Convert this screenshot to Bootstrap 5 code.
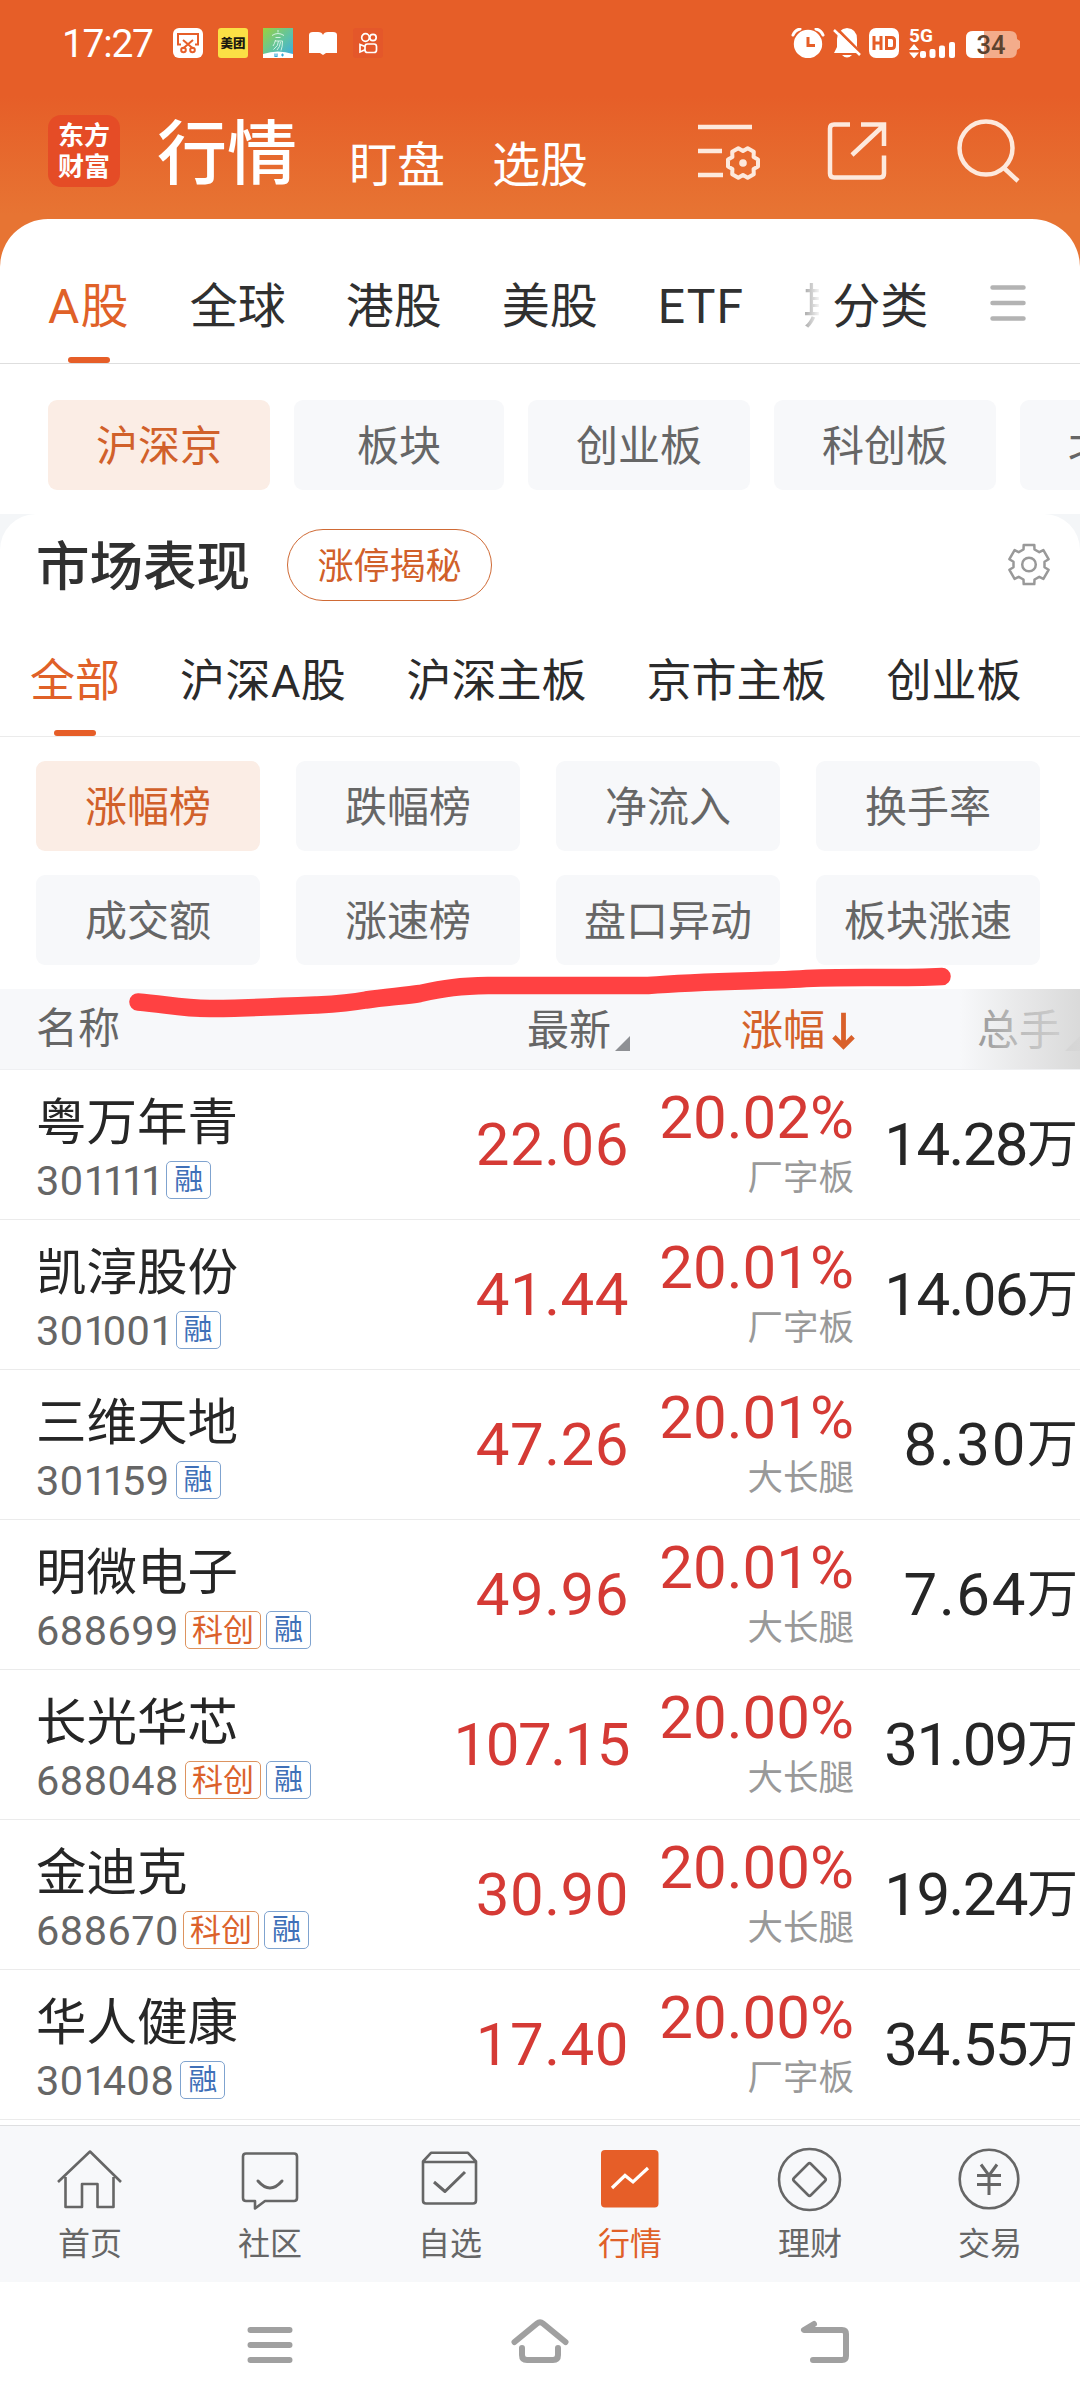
<!DOCTYPE html>
<html lang="zh-CN">
<head>
<meta charset="utf-8">
<meta name="viewport" content="width=device-width, initial-scale=1">
<title>行情</title>
<link rel="stylesheet" href="https://cdn.jsdelivr.net/npm/bootstrap@5.3.0/dist/css/bootstrap.min.css">
<style>
  body { width: 1080px; font-family: Roboto, "Noto Sans CJK SC", sans-serif; color: #303030; background: #fff; line-height: 1; overflow-x: hidden; }
  svg { display: block; flex: none; }
  .app-head { height: 267px; margin-bottom: -48px; background: linear-gradient(#e65e28 0, #e65e28 96px, #e77433 215px); color: #fff; }
  .status-bar { height: 88px; padding: 0 60px 2px 62px; }
  .clock { font-size: 39px; letter-spacing: -1.3px; width: 111px; padding-top: 2px; }
  .brand-row { height: 131px; padding: 27px 58px 0 48px; }
  .logo-box { width: 72px; height: 72px; border-radius: 13px; background: #e54c26; font-size: 26px; font-weight: 700; line-height: 31px; padding-top: 6px; text-align: center; }
  .brand-title { font-size: 70px; font-weight: 500; margin: 5px 0 0 37px; }
  .brand-link { font-size: 48px; margin-top: 27px; }
  .sheet { background: #fff; border-radius: 48px 48px 0 0; position: relative; }
  .tabs-main { height: 145px; padding: 64px 54px 0 48px; border-bottom: 1px solid #dedede; font-size: 48px; }
  .tabs-sub { height: 136px; padding: 58px 0 0 30px; border-bottom: 1px solid #ebebeb; font-size: 45px; gap: 60px; color: #2b2b2b; }
  .tab-on { color: #e06128; position: relative; }
  .tab-on::after { content: ""; position: absolute; left: 50%; margin-left: -21px; width: 42px; height: 6px; border-radius: 3px; background: #e65e28; top: 74px; }
  .tabs-sub .tab-on::after { top: 71px; }
  .cut-tab { width: 16px; overflow: hidden; -webkit-mask-image: linear-gradient(90deg, rgba(0,0,0,.45), rgba(0,0,0,.05)); mask-image: linear-gradient(90deg, rgba(0,0,0,.45), rgba(0,0,0,.05)); }
  .chip { height: 90px; border-radius: 9px; background: #f7f8fa; color: #666; font-size: 42px; padding: 3px 48px 0; min-width: 210px; display: flex; align-items: center; justify-content: center; white-space: nowrap; flex: none; }
  .chip-on { background: #fbede5; color: #d1602a; }
  .chips-scroll { height: 150px; padding: 36px 0 0 48px; gap: 24px; }
  .panel-back { background: #f4f6f8; }
  .panel-top { background: #fff; border-radius: 36px 36px 0 0; padding: 15px 30px 0 36px; }
  .panel-title { font-size: 53.5px; font-weight: 500; padding-top: 6px; }
  .pill-btn { height: 72px; width: 205px; border: 1.5px solid #cf6a35; border-radius: 37px; color: #d1602a; font-size: 36px; margin-left: 37px; padding-top: 4px; }
  .chips-grid { display: grid; grid-template-columns: repeat(4, 224px); gap: 24px 36px; padding: 24px 36px; }
  .chips-grid .chip { min-width: 0; padding: 3px 0 0; }
  .thead-row { height: 81px; background: #f7f8fa; border-bottom: 1px solid #eff0f2; font-size: 42px; color: #666; position: relative; }
  .fade-right { position: absolute; right: 0; top: 0; width: 120px; height: 80px; background: linear-gradient(90deg, rgba(226,226,226,0), rgba(222,222,222,.6) 50%, rgba(216,216,216,.95)); }
  .pen-line { position: absolute; left: 120px; top: -30px; }
  .c-name { width: 420px; padding-left: 36px; }
  .c-price { width: 209px; letter-spacing: .5px; }
  .c-rate { width: 225px; }
  .c-vol { width: 224px; }
  .stock-row { height: 150px; border-bottom: 1px solid #ebebeb; }
  .s-name { font-size: 50.5px; color: #262626; margin-top: 27px; line-height: 52px; }
  .s-code { font-size: 41.5px; color: #666; margin-top: 12px; height: 40px; line-height: 40px; gap: 5px; }
  .s-code b { font-weight: 400; letter-spacing: -4.2px; }
  .s-code .num { letter-spacing: .5px; margin-right: 1px; }
  .tag-box { height: 38px; border: 1.5px solid; border-radius: 5px; line-height: 35px; padding-top: 1px; text-align: center; }
  .tag-r { width: 45px; font-size: 29px; color: #3f70b8; border-color: #7fa3cf; }
  .tag-k { width: 76px; font-size: 31px; color: #dc622b; border-color: #dd935f; }
  .big-num { font-size: 60px; line-height: 60px; }
  .up { color: #d53a35; }
  .vol { color: #262626; white-space: nowrap; letter-spacing: -1.6px; }
  .vol-short { letter-spacing: 1.6px; }
  .vol span { font-size: 51px; letter-spacing: 0; }
  .c-rate .big-num { margin-top: 18px; }
  .shape-tag { font-size: 35.5px; color: #999; line-height: 36px; margin-top: 12px; }
  .bottom-nav { height: 157px; margin-top: 5px; border-top: 1px solid #dedfe1; background: #f7f8fa; color: #666; font-size: 32px; }
  .bottom-nav > div { width: 180px; padding-top: 20px; gap: 16px; }
  .nav-now { color: #e06128; }
  .sys-bar { height: 126px; padding: 0 135px; }
  .sys-bar > div { width: 270px; padding-top: 30px; }
</style>
</head>
<body>
<header class="app-head">
  <div class="status-bar d-flex align-items-center">
    <div class="clock">17:27</div>
    <div class="d-flex" style="gap:15px">
      <svg width="30" height="30" viewBox="0 0 30 30"><rect width="30" height="30" rx="6" fill="#fff"/><g fill="none" stroke="#e65e28" stroke-width="2"><path d="M8 16.500H5V6h20v10.500h-3M10 12l10 8.500M20 12l-10 8.500"/><circle cx="10.500" cy="22" r="2.300"/><circle cx="19.500" cy="22" r="2.300"/></g></svg>
      <svg width="30" height="30" viewBox="0 0 30 30"><rect width="30" height="30" rx="3" fill="#fbe045"/><text x="15" y="19.800" text-anchor="middle" font-size="12.500" font-weight="900" fill="#1c1a10">美团</text></svg>
      <svg width="30" height="30" viewBox="0 0 30 30"><defs><linearGradient id="gb" x1="0" y1="0" x2="1" y2="1"><stop offset="0" stop-color="#9ad23f"/><stop offset=".55" stop-color="#5fc3a4"/><stop offset="1" stop-color="#3aa9e6"/></linearGradient></defs><rect width="30" height="30" fill="url(#gb)"/><path d="M0 26q15-5 30 0v4H0z" fill="#fff"/><path d="M15 2v2.500M9 7.500q6-4 12 0M12.500 9.500h5M12.500 12q-1 4-2.500 6M12 13h7.500q0 6-1.500 9.500M15.500 13q0 5-5 8.500M17.500 14q-.5 5-3.500 8" fill="none" stroke="#dcf7ec" stroke-width=".9"/><path d="M12 25.500v3h2v-3M18 27h3M19.500 25.500v3" stroke="#39a9d8" stroke-width="1.200" fill="none"/></svg>
      <svg width="30" height="30" viewBox="0 0 30 30"><path d="M1 7q0-3 4-3h5q4 0 5 3 1-3 5-3h5q4 0 4 3v18H18l-3 2-3-2H1z" fill="#fff"/></svg>
      <svg width="30" height="30" viewBox="0 0 30 30"><rect width="30" height="30" rx="3" fill="#e4572a"/><g fill="none" stroke="#fff" stroke-width="1.700"><circle cx="12.500" cy="9.500" r="3.800"/><circle cx="20" cy="9.500" r="3.200"/><rect x="12" y="16" width="11.500" height="8.500" rx="2.500"/><path d="M12 18.500l-5-2v7.500l5-2.200"/></g></svg>
    </div>
    <div class="d-flex align-items-start ms-auto">
      <svg width="34" height="30" viewBox="0 0 34 30"><circle cx="17" cy="16" r="14.200" fill="#fff"/><path d="M2 7q2-5 7-6M32 7q-2-5-7-6" stroke="#fff" stroke-width="3" fill="none" stroke-linecap="round"/><path d="M17 9v8.500h7" stroke="#e65e28" stroke-width="3" fill="none"/></svg>
      <svg class="ms-2" width="28" height="30" viewBox="0 0 28 30"><path d="M14 0q10 1 10 11v8l3 6H1l3-6v-8Q5 1 14 0zM9 27h10q-5 5-10 0z" fill="#fff"/><path d="M3 0l26 26" stroke="#e65e28" stroke-width="3"/><path d="M1 2l26 25" stroke="#fff" stroke-width="2.500"/></svg>
      <svg class="ms-2" width="30" height="30" viewBox="0 0 30 30"><rect width="30" height="30" rx="7" fill="#fff"/><path d="M5 8v14M12 8v14M5 15h7M17.500 9.500h5q3 0 3 3v5q0 3-3 3h-5z" fill="none" stroke="#e65e28" stroke-width="3"/></svg>
      <svg class="ms-2" style="margin-right:9px" width="50" height="30" viewBox="-2 0 50 30"><text x="0" y="14" font-size="19" font-weight="700" fill="#fff" textLength="24">5G</text><path d="M0 22l5-6 5 6zM0 24.500h10l-5 6z" fill="#fff"/><g fill="#fff"><rect x="11" y="23" width="6" height="7" rx="2"/><rect x="20.500" y="21" width="6" height="9" rx="2"/><rect x="30" y="17.500" width="6" height="12.500" rx="2"/><rect x="40" y="14" width="6" height="16" rx="2"/></g></svg>
      <svg width="54" height="30" viewBox="0 0 54 30"><path d="M7 3h37q7 0 7 7v1l3 2v7l-3 2q0 8-7 8H7q-7 0-7-7V10q0-7 7-7z" fill="#f3ac8b"/><path d="M7 3h11v27H7q-7 0-7-7V10q0-7 7-7z" fill="#fff"/><text x="25" y="25.500" text-anchor="middle" font-size="25.500" font-weight="500" fill="#5d422e">34</text></svg>
    </div>
  </div>
  <div class="brand-row d-flex align-items-start">
    <div class="logo-box">东方<br>财富</div>
    <div class="brand-title">行情</div>
    <div class="brand-link" style="margin-left:52px">盯盘</div>
    <div class="brand-link" style="margin-left:47px">选股</div>
    <svg class="ms-auto" width="66" height="72" viewBox="699 115 66 72" fill="none" stroke="#fde9dd" stroke-width="4.500"><path d="M699 127h54M699 151h24M699 175h25"/><path stroke-linejoin="round" stroke-width="4" transform="translate(744 163)" d="M15-3.600V3.600L10.600 6l.2 5.300L4.700 14.800 0 12l-4.700 2.800-6.100-3.500.2-5.300L-15 3.600V-3.600L-10.600-6l-.2-5.300L-4.700-14.800 0-12l4.700-2.800 6.100 3.500-.2 5.300z"/><circle cx="744" cy="163" r="3.800" fill="#fde9dd" stroke="none"/></svg>
    <svg style="margin-left:63px" width="62" height="72" viewBox="828 115 62 72" fill="none" stroke="#fde9dd" stroke-width="4.500"><path d="M851 124.500h-16q-4 0-4 4v45q0 4 4 4h46q4 0 4-4v-18M862 124.500h23V146M884 126l-31 29"/></svg>
    <svg style="margin-left:67px" width="66" height="72" viewBox="957 115 66 72" fill="none" stroke="#fde9dd" stroke-width="4.500"><circle cx="987" cy="148" r="26.500"/><path d="M1005 168l14 13"/></svg>
  </div>
</header>

<main class="sheet">
  <nav class="tabs-main d-flex align-items-start">
    <div class="tab-on" style="letter-spacing:1.2px">A股</div>
    <div style="margin-left:60px">全球</div>
    <div style="margin-left:60px">港股</div>
    <div style="margin-left:60px">美股</div>
    <div style="margin-left:60px;letter-spacing:1.2px">ETF</div>
    <div class="cut-tab" style="margin-left:59px">期</div>
    <div style="margin-left:13px">分类</div>
    <svg class="ms-auto" width="36" height="48" viewBox="990 283 36 48" stroke="#b3b3b3" stroke-width="4.500" stroke-linecap="round"><path d="M992.500 287.500h31M992.500 303h31M992.500 318.500h31"/></svg>
  </nav>
  <div class="chips-scroll d-flex overflow-hidden">
    <div class="chip chip-on">沪深京</div>
    <div class="chip">板块</div>
    <div class="chip">创业板</div>
    <div class="chip">科创板</div>
    <div class="chip">北交所</div>
  </div>

  <section class="panel-back">
    <div class="panel-top">
      <div class="d-flex align-items-center">
        <div class="panel-title">市场表现</div>
        <div class="pill-btn d-flex align-items-center justify-content-center">涨停揭秘</div>
        <svg class="ms-auto" width="42" height="44" viewBox="-21 -21.500 42 44" fill="none" stroke="#999" stroke-width="2.500" stroke-linejoin="round"><path d="M15.500 2.800 19.600 5.300 14.400 14.400 10.300 12.300 5.500 15 5.300 19.600-5.300 19.600-5.500 15-10.300 12.300-14.400 14.400-19.600 5.300-15.500 2.800-15.500-2.800-19.600-5.300-14.400-14.400-10.300-12.300-5.500-15-5.300-19.600 5.300-19.600 5.500-15 10.300-12.300 14.400-14.400 19.600-5.300 15.500-2.800z"/><circle r="6.800"/></svg>
      </div>
    </div>
  </section>
  <nav class="tabs-sub d-flex align-items-start">
    <div class="tab-on">全部</div>
    <div style="letter-spacing:.5px">沪深A股</div>
    <div>沪深主板</div>
    <div>京市主板</div>
    <div>创业板</div>
  </nav>
  <div class="chips-grid">
    <div class="chip chip-on">涨幅榜</div>
    <div class="chip">跌幅榜</div>
    <div class="chip">净流入</div>
    <div class="chip">换手率</div>
    <div class="chip">成交额</div>
    <div class="chip">涨速榜</div>
    <div class="chip">盘口异动</div>
    <div class="chip">板块涨速</div>
  </div>

  <section>
    <div class="thead-row d-flex align-items-center">
      <div class="c-name">名称</div>
      <div class="d-flex justify-content-end align-items-end pt-1" style="width:210px"><span>最新</span><svg class="ms-1" width="15" height="16" viewBox="0 0 15 16" fill="#8e9094"><path d="M15 0v15H0z"/></svg></div>
      <div class="c-rate d-flex justify-content-end align-items-end pt-1" style="color:#d4622a"><span>涨幅</span><svg style="margin-left:7px" width="23" height="42" viewBox="0 0 24 42" fill="none" stroke="#d9602a" stroke-width="5"><path d="M12 2v34M2 27l10 10 10-10"/></svg></div>
      <div class="d-flex justify-content-end align-items-end pt-1" style="width:225px;color:#8b8b8b"><span>总手</span><svg class="ms-1" width="15" height="16" viewBox="0 0 15 16" fill="#bbb"><path d="M15 0v15H0z"/></svg></div>
      <div class="fade-right"></div>
      <svg class="pen-line" width="840" height="60" viewBox="120 959 840 60" fill="none" stroke="#ff4142" stroke-width="17.500" stroke-linecap="round" stroke-linejoin="round"><path d="M138 1002C165 1004 180 1008.500 210 1008.500C235 1008.500 270 1007 317 1005C335 1004 350 1003 366 1000C385 997 405 996 420 993.500C445 988 460 986 488 985.500H648C700 981 760 981 800 979C850 976 890 979 942 976.500"/></svg>
    </div>

    <div class="stock-row d-flex">
      <div class="c-name"><div class="s-name">粤万年青</div><div class="s-code d-flex"><span class="num">30<b>1111</b></span><span class="tag-box tag-r">融</span></div></div>
      <div class="c-price d-flex align-items-center justify-content-end big-num up">22.06</div>
      <div class="c-rate text-end"><div class="big-num up">20.02%</div><div class="shape-tag">厂字板</div></div>
      <div class="c-vol d-flex align-items-center justify-content-end big-num vol">14.28<span>万</span></div>
    </div>
    <div class="stock-row d-flex">
      <div class="c-name"><div class="s-name">凯淳股份</div><div class="s-code d-flex"><span class="num">30<b>1</b>00<b>1</b></span><span class="tag-box tag-r">融</span></div></div>
      <div class="c-price d-flex align-items-center justify-content-end big-num up">41.44</div>
      <div class="c-rate text-end"><div class="big-num up">20.01%</div><div class="shape-tag">厂字板</div></div>
      <div class="c-vol d-flex align-items-center justify-content-end big-num vol">14.06<span>万</span></div>
    </div>
    <div class="stock-row d-flex">
      <div class="c-name"><div class="s-name">三维天地</div><div class="s-code d-flex"><span class="num">30<b>11</b>59</span><span class="tag-box tag-r">融</span></div></div>
      <div class="c-price d-flex align-items-center justify-content-end big-num up">47.26</div>
      <div class="c-rate text-end"><div class="big-num up">20.01%</div><div class="shape-tag">大长腿</div></div>
      <div class="c-vol d-flex align-items-center justify-content-end big-num vol vol-short">8.30<span>万</span></div>
    </div>
    <div class="stock-row d-flex">
      <div class="c-name"><div class="s-name">明微电子</div><div class="s-code d-flex"><span class="num">688699</span><span class="tag-box tag-k">科创</span><span class="tag-box tag-r">融</span></div></div>
      <div class="c-price d-flex align-items-center justify-content-end big-num up">49.96</div>
      <div class="c-rate text-end"><div class="big-num up">20.01%</div><div class="shape-tag">大长腿</div></div>
      <div class="c-vol d-flex align-items-center justify-content-end big-num vol vol-short">7.64<span>万</span></div>
    </div>
    <div class="stock-row d-flex">
      <div class="c-name"><div class="s-name">长光华芯</div><div class="s-code d-flex"><span class="num">688048</span><span class="tag-box tag-k">科创</span><span class="tag-box tag-r">融</span></div></div>
      <div class="c-price d-flex align-items-center justify-content-end big-num up" style="letter-spacing:-1.5px">107.15</div>
      <div class="c-rate text-end"><div class="big-num up">20.00%</div><div class="shape-tag">大长腿</div></div>
      <div class="c-vol d-flex align-items-center justify-content-end big-num vol">31.09<span>万</span></div>
    </div>
    <div class="stock-row d-flex">
      <div class="c-name"><div class="s-name">金迪克</div><div class="s-code d-flex"><span class="num" style="margin-right:-1px">688670</span><span class="tag-box tag-k">科创</span><span class="tag-box tag-r">融</span></div></div>
      <div class="c-price d-flex align-items-center justify-content-end big-num up">30.90</div>
      <div class="c-rate text-end"><div class="big-num up">20.00%</div><div class="shape-tag">大长腿</div></div>
      <div class="c-vol d-flex align-items-center justify-content-end big-num vol">19.24<span>万</span></div>
    </div>
    <div class="stock-row d-flex">
      <div class="c-name"><div class="s-name">华人健康</div><div class="s-code d-flex"><span class="num">30<b>1</b>408</span><span class="tag-box tag-r">融</span></div></div>
      <div class="c-price d-flex align-items-center justify-content-end big-num up">17.40</div>
      <div class="c-rate text-end"><div class="big-num up">20.00%</div><div class="shape-tag">厂字板</div></div>
      <div class="c-vol d-flex align-items-center justify-content-end big-num vol">34.55<span>万</span></div>
    </div>
  </section>
</main>

<nav class="bottom-nav d-flex">
  <div class="d-flex flex-column align-items-center">
    <svg width="66" height="66" viewBox="57 2146 66 66" fill="none" stroke="#666" stroke-width="2.600" stroke-linejoin="round"><path d="M58 2182l32-30.500 31 30.500M65.500 2177v30h16.500v-23h15.500v23h16v-30"/></svg>
    <span>首页</span>
  </div>
  <div class="d-flex flex-column align-items-center">
    <svg width="66" height="66" viewBox="237 2146 66 66" fill="none" stroke="#666" stroke-width="2.600" stroke-linejoin="round" stroke-linecap="round"><path d="M246 2153.500h48q3 0 3 3v41.500q0 3-3 3h-29l-10 7.500v-7.500h-9q-3 0-3-3v-41.500q0-3 3-3z"/><path d="M258 2181q12 14 24 0" stroke-width="3"/></svg>
    <span>社区</span>
  </div>
  <div class="d-flex flex-column align-items-center">
    <svg width="66" height="66" viewBox="417 2146 66 66" fill="none" stroke="#666" stroke-width="2.600" stroke-linejoin="round"><path d="M423 2161.500l8-8.700h37l8 8.700v39q0 3-3 3h-47q-3 0-3-3zM423 2162h53"/><path d="M434 2182l11 9.500 20-19.500" stroke-width="3"/></svg>
    <span>自选</span>
  </div>
  <div class="d-flex flex-column align-items-center nav-now">
    <svg width="66" height="66" viewBox="597 2146 66 66"><rect x="601" y="2150" width="57.500" height="57.500" rx="4" fill="#e65e28"/><path d="M612 2188l13-12.500 8 6.500 15-14" fill="none" stroke="#fff" stroke-width="3.200"/></svg>
    <span>行情</span>
  </div>
  <div class="d-flex flex-column align-items-center">
    <svg width="66" height="66" viewBox="777 2146 66 66" fill="none" stroke="#666" stroke-width="2.600" stroke-linejoin="round"><circle cx="809.500" cy="2179.500" r="30.500"/><path d="M811 2164l14 14q1.500 1.500 0 3l-14 14q-1.500 1.500-3 0l-14-14q-1.500-1.500 0-3l14-14q1.500-1.500 3 0z"/></svg>
    <span>理财</span>
  </div>
  <div class="d-flex flex-column align-items-center">
    <svg width="66" height="66" viewBox="957 2146 66 66" fill="none" stroke="#666" stroke-width="2.600"><circle cx="989" cy="2179" r="29.300"/><path d="M981 2164.500l8 11 8-11M989 2175v20M977 2175.500h24M977 2184.500h24" stroke-width="3"/></svg>
    <span>交易</span>
  </div>
</nav>
<footer class="sys-bar d-flex">
  <div class="d-flex justify-content-center"><svg width="66" height="60" viewBox="237 2312 66 60" stroke="#a0a0a0" stroke-width="6" stroke-linecap="round"><path d="M250.500 2330h39M250.500 2345h39M250.500 2360h39"/></svg></div>
  <div class="d-flex justify-content-center"><svg width="66" height="60" viewBox="507 2312 66 60" fill="none" stroke="#a0a0a0" stroke-width="6" stroke-linecap="round" stroke-linejoin="round"><path d="M514.500 2342L537 2323.500q3-2.500 6 0L565.500 2342M522 2348v7q0 5 5 5h26q5 0 5-5v-7"/></svg></div>
  <div class="d-flex justify-content-center"><svg width="96" height="60" viewBox="762 2312 96 60" fill="none" stroke="#a0a0a0" stroke-width="6" stroke-linecap="round" stroke-linejoin="round"><path d="M814 2324l-10 6h38q4 0 4 4v22q0 4-4 4h-29"/></svg></div>
</footer>
<script src="https://cdn.jsdelivr.net/npm/bootstrap@5.3.0/dist/js/bootstrap.bundle.min.js"></script>
</body>
</html>
